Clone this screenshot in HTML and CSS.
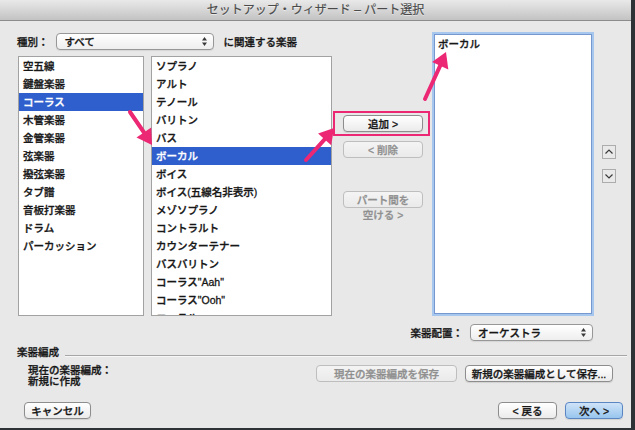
FILE: index.html
```html
<!DOCTYPE html>
<html lang="ja">
<head>
    <meta charset="utf-8">
    <title>セットアップ・ウィザード – パート選択</title>
    <link rel="stylesheet" href="styles.css">
</head>
<body>

<div class="window">
    <div class="titlebar">セットアップ・ウィザード – パート選択</div>

    <div class="main">
        <div class="picker">
            <div class="filter">
                <label>種別：</label>
                <div class="popup filter-popup">
                    <span>すべて</span>
                    <svg class="popup-arrows" width="5" height="9" viewBox="0 0 5 9"><polygon points="0,3.5 2.5,0 5,3.5"/><polygon points="0,5.5 2.5,9 5,5.5"/></svg>
                </div>
                <span class="filter-note">に関連する楽器</span>
            </div>
            <div class="lists">
                <ul class="list family-list">
                    <li>空五線</li>
                    <li>鍵盤楽器</li>
                    <li class="selected">コーラス</li>
                    <li>木管楽器</li>
                    <li>金管楽器</li>
                    <li>弦楽器</li>
                    <li>撥弦楽器</li>
                    <li>タブ譜</li>
                    <li>音板打楽器</li>
                    <li>ドラム</li>
                    <li>パーカッション</li>
                </ul>
                <ul class="list instrument-list">
                    <li>ソプラノ</li>
                    <li>アルト</li>
                    <li>テノール</li>
                    <li>バリトン</li>
                    <li>バス</li>
                    <li class="selected">ボーカル</li>
                    <li>ボイス</li>
                    <li>ボイス(五線名非表示)</li>
                    <li>メゾソプラノ</li>
                    <li>コントラルト</li>
                    <li>カウンターテナー</li>
                    <li>バスバリトン</li>
                    <li>コーラス"Aah"</li>
                    <li>コーラス"Ooh"</li>
                    <li>コーラル</li>
                </ul>
            </div>
        </div>

        <div class="actions">
            <button class="btn add-btn">追加 &gt;</button>
            <button class="btn remove-btn" disabled>&lt; 削除</button>
            <button class="btn space-btn" disabled>パート間を<br>空ける &gt;</button>
        </div>

        <ul class="list score-list">
            <li>ボーカル</li>
        </ul>

        <div class="order">
            <button class="order-btn"><svg width="12" height="12" viewBox="0 0 12 12"><polyline points="2.5,7.5 6,4 9.5,7.5"/></svg></button>
            <button class="order-btn"><svg width="12" height="12" viewBox="0 0 12 12"><polyline points="2.5,4.5 6,8 9.5,4.5"/></svg></button>
        </div>
    </div>

    <div class="layout-row">
        <label>楽器配置：</label>
        <div class="popup layout-popup">
            <span>オーケストラ</span>
            <svg class="popup-arrows" width="5" height="9" viewBox="0 0 5 9"><polygon points="0,3.5 2.5,0 5,3.5"/><polygon points="0,5.5 2.5,9 5,5.5"/></svg>
        </div>
    </div>

    <div class="group-title">
        <span>楽器編成</span>
        <div class="group-line"></div>
    </div>

    <div class="group-body">
        <div class="current">
            <div>現在の楽器編成：</div>
            <div>新規に作成</div>
        </div>
        <button class="btn save-btn" disabled>現在の楽器編成を保存</button>
        <button class="btn new-btn">新規の楽器編成として保存...</button>
    </div>

    <div class="footer">
        <button class="btn cancel-btn">キャンセル</button>
        <button class="btn back-btn">&lt; 戻る</button>
        <button class="btn default next-btn">次へ &gt;</button>
    </div>

    <!-- annotation arrows drawn over the dialog -->
    <svg class="marks" width="631" height="428" viewBox="0 0 631 428">
        <rect x="334" y="112" width="95" height="23" fill="none" stroke="#ec2773" stroke-width="2"/>
        <line x1="130" y1="112" x2="144" y2="132.5" stroke="#ec2773" stroke-width="4" stroke-linecap="round"/>
        <polygon points="152,145 136.5,137.5 151.2,127.4" fill="#ec2773"/>
        <line x1="306" y1="160" x2="324.6" y2="139.4" stroke="#ec2773" stroke-width="4" stroke-linecap="round"/>
        <polygon points="334,128 331.2,145.3 318.1,133.5" fill="#ec2773"/>
        <line x1="425" y1="99" x2="440.2" y2="65.7" stroke="#ec2773" stroke-width="4" stroke-linecap="round"/>
        <polygon points="446,52 448.3,69.4 432.1,62" fill="#ec2773"/>
    </svg>
</div>

</body>
</html>
```

FILE: styles.css
```css
* {
    box-sizing: border-box;
    margin: 0;
    padding: 0;
}
body {
    width: 635px;
    height: 430px;
    overflow: hidden;
    background-color: #2c3236;
    font-family: "Liberation Sans", "Noto Sans CJK JP", sans-serif;
    font-size: 10.5px;
    font-weight: 500;
    color: #161616;
    -webkit-text-stroke: 0.3px currentColor;
}
.window {
    position: relative;
    width: 631px;
    height: 428px;
    background-color: #e8e8e8;
}
.titlebar {
    height: 21px;
    line-height: 20px;
    text-align: center;
    font-size: 12px;
    font-weight: 400;
    color: #4a4a4a;
    background: linear-gradient(#e9e9e9, #c3c3c3);
    border-bottom: 1px solid #8c8c8c;
    text-shadow: 0 1px 0 rgba(255, 255, 255, 0.5);
    -webkit-text-stroke: 0.15px currentColor;
}

/* top area */
.main {
    display: flex;
    height: 295px;
    padding: 11px 0 0 18px;
}
.picker {
    display: flex;
    flex-direction: column;
    width: 314px;
}
.filter {
    display: flex;
    align-items: center;
    height: 18px;
}
.filter label {
    margin-left: -1px;
    margin-right: 7px;
}
.filter-popup {
    width: 158px;
}
.filter-note {
    margin-left: 10px;
}
.lists {
    display: flex;
    gap: 7px;
    height: 260px;
    margin-top: 6px;
}
.list {
    list-style: none;
    background-color: #fff;
    border: 1px solid #a2a2a2;
    overflow: hidden;
}
.list li {
    height: 18px;
    line-height: 18px;
    padding-left: 4px;
    white-space: nowrap;
}
.list li.selected {
    background-color: #2f5fcd;
    color: #fff;
}
.family-list {
    width: 126px;
}
.instrument-list {
    width: 181px;
}

.actions {
    display: flex;
    flex-direction: column;
    width: 80px;
    margin-left: 11px;
    padding-top: 83px;
}
.remove-btn {
    height: 16px;
    margin-top: 9px;
}
.space-btn {
    height: 38px;
    margin-top: 33px;
    line-height: 15px;
}

.score-list {
    width: 158px;
    height: 280px;
    margin: 2px 0 0 11px;
    border: 1px solid #7599cf;
    box-shadow: 0 0 0 2px #a8c7ee;
}
.score-list li {
    padding-left: 3px;
}

.order {
    display: flex;
    flex-direction: column;
    gap: 10px;
    margin-left: 10px;
    padding-top: 113px;
}
.order-btn {
    display: flex;
    align-items: center;
    justify-content: center;
    width: 14px;
    height: 14px;
    border: 1px solid #acacac;
    background-color: #e9e9e9;
}
.order-btn polyline {
    fill: none;
    stroke: #3a3a3a;
    stroke-width: 1.2;
}

/* popups and buttons */
.popup {
    display: flex;
    align-items: center;
    justify-content: space-between;
    height: 17px;
    padding: 0 6px 0 8px;
    border: 1px solid #979797;
    border-radius: 4px;
    background: linear-gradient(#ffffff, #eeeeee);
    box-shadow: 0 1px 1px rgba(0, 0, 0, 0.08);
}
.popup-arrows {
    fill: #3a3a3a;
}
.btn {
    height: 17px;
    font: inherit;
    color: #161616;
    border: 1px solid #8d8d8d;
    border-radius: 4px;
    background: linear-gradient(#ffffff, #ebebeb);
    box-shadow: 0 1px 1px rgba(0, 0, 0, 0.1);
}
.btn:disabled {
    color: #8f8f8f;
    border-color: #bebebe;
    background: linear-gradient(#f4f4f4, #eaeaea);
    box-shadow: none;
}
.btn.default {
    border-color: #5a86c2;
    background: linear-gradient(#cfe3f8, #98c5ee);
}

/* bottom area */
.layout-row {
    display: flex;
    align-items: center;
    justify-content: flex-end;
    height: 17px;
    margin-top: 8px;
    padding-right: 38px;
}
.layout-row label {
    margin-right: 7px;
}
.layout-popup {
    width: 123px;
    padding-left: 7px;
}
.group-title {
    display: flex;
    align-items: flex-end;
    height: 12px;
    line-height: 12px;
    margin-top: 5px;
    padding: 0 4px 0 17px;
}
.group-line {
    flex: 1;
    height: 2px;
    margin: 0 0 1px 6px;
    border-top: 1px solid #a6a6a6;
    border-bottom: 1px solid #f7f7f7;
}
.group-body {
    display: flex;
    align-items: flex-start;
    height: 23px;
    margin-top: 7px;
    padding: 0 18px 0 28px;
}
.current {
    line-height: 11px;
    margin-top: 0;
}
.save-btn {
    width: 141px;
    margin-left: auto;
}
.new-btn {
    width: 148px;
    margin-left: 8px;
}
.footer {
    display: flex;
    margin-top: 14px;
    padding: 0 8px 0 24px;
}
.cancel-btn {
    width: 67px;
}
.back-btn {
    width: 59px;
    margin-left: auto;
}
.next-btn {
    width: 58px;
    margin-left: 8px;
}

.marks {
    position: absolute;
    top: 0;
    left: 0;
    pointer-events: none;
}
```
